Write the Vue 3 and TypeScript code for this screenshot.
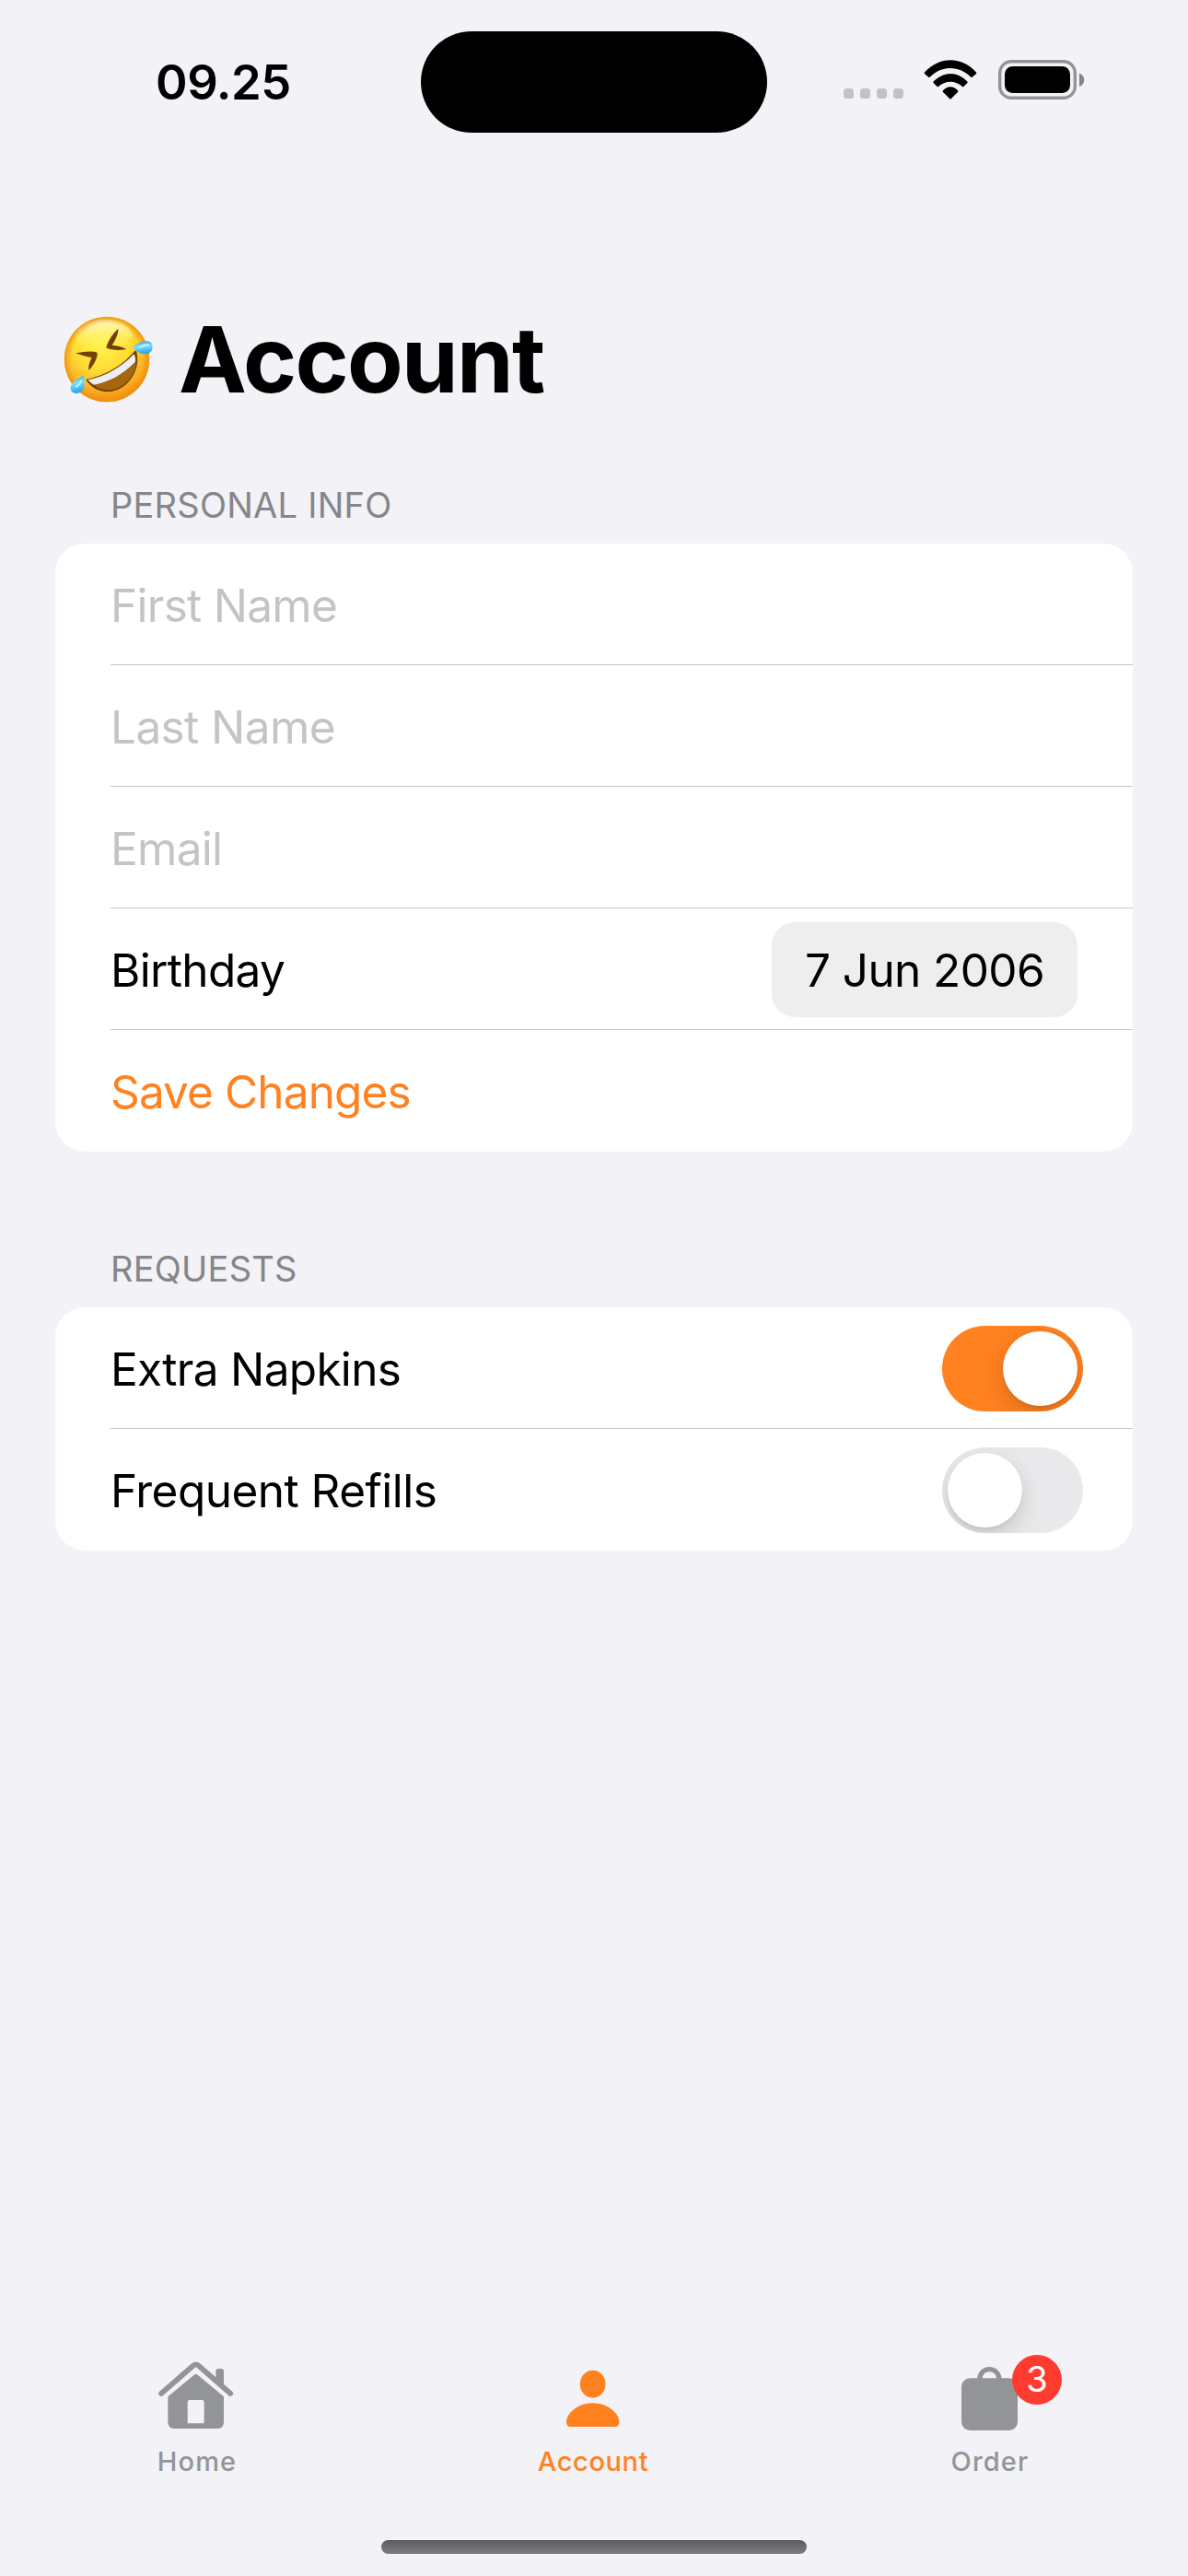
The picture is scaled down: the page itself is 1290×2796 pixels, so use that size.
<script setup lang="ts">
import { ref } from 'vue'

interface Field {
  label: string
  spacing: number
}

interface Request {
  label: string
  spacing: number
  on: boolean
}

const fields: Field[] = [
  { label: 'First Name', spacing: -0.73 },
  { label: 'Last Name', spacing: -0.6 },
  { label: 'Email', spacing: -0.7 },
]

const requests = ref<Request[]>([
  { label: 'Extra Napkins', spacing: -0.7, on: true },
  { label: 'Frequent Refills', spacing: -0.52, on: false },
])
</script>

<template>
  <div class="screen">
    <header class="status">
      <span class="time">09.25</span>
      <div class="island"></div>
      <div class="indicators">
        <div class="dots"><i v-for="n in 4" :key="n"></i></div>
        <svg class="wifi" viewBox="0 0 174 129">
          <path d="M4.500 41.500C27 18 55 3 88 3s61 15 83.500 38.500q3 3 0 6L159 58q-2 2-4 0C136 39.500 113.500 29 88 29S39 39.500 21 58q-2 2-4 0L4.500 47.500q-3-3 0-6Z" transform="translate(-1 -2)" />
          <path d="M32.500 70C48 54.500 66.500 45 87 45s39 9.500 54.500 25q3 3 0 5.500L130 87q-2 2-4 0C115 77 102 71 87 71S59 77 48 87q-2 2-4 0L32.500 75.500q-3-2.500 0-5.500Z" />
          <path d="M63 99.500Q74 88 87 88t24 11.500q3 3 0 5.500L89 126.500q-2 2-4 0L63 105q-3-2.500 0-5.500Z" />
        </svg>
        <svg class="battery" viewBox="0 0 94 43">
          <rect x="1.700" y="1.700" width="81.600" height="39.600" rx="12.500" fill="none" stroke="#949397" stroke-width="3.400" />
          <rect x="7" y="7" width="71" height="29" rx="8.500" />
          <path d="M88 14.500c7 2.500 7 12 0 14.500Z" fill="#858488" />
        </svg>
      </div>
    </header>

    <main>
      <h1>
        <svg class="emoji" viewBox="0 0 420 420" role="img" aria-label="rolling on the floor laughing">
          <defs>
            <radialGradient id="face" cx="0.44" cy="0.3" r="0.72">
              <stop offset="0" stop-color="#fff64a" />
              <stop offset="0.45" stop-color="#ffdd35" />
              <stop offset="0.75" stop-color="#fcb526" />
              <stop offset="1" stop-color="#ee8a0c" />
            </radialGradient>
            <linearGradient id="shine" x1="0" y1="0" x2="0" y2="1">
              <stop offset="0" stop-color="#fffbd8" stop-opacity="0.95" />
              <stop offset="1" stop-color="#fff35c" stop-opacity="0" />
            </linearGradient>
            <radialGradient id="rim" cx="0.5" cy="0.5" r="0.5">
              <stop offset="0.84" stop-color="#f49a12" stop-opacity="0" />
              <stop offset="1" stop-color="#f0900c" stop-opacity="0.9" />
            </radialGradient>
            <linearGradient id="tear" x1="0" y1="0" x2="0.2" y2="1">
              <stop offset="0" stop-color="#2f9fe6" />
              <stop offset="0.5" stop-color="#7fdcfb" />
              <stop offset="1" stop-color="#25a6ef" />
            </linearGradient>
          </defs>
          <circle cx="198" cy="210" r="138.500" fill="url(#face)" />
          <ellipse cx="188" cy="130" rx="92" ry="50" fill="url(#shine)" />
          <circle cx="198" cy="210" r="138.500" fill="url(#rim)" />
          <path d="M95 190C120 185 147 182 162 186q6 2 5 8c-2 17-14 38-28 52-2-13 3-29 10-41-16-3-34-8-54-15Z" fill="#74400a" />
          <path d="M235 110c1 16-9 38-20 54 16 1 33 5 47 13-19 4-42 4-61-2q-6-2-4-8c7-20 20-41 38-57Z" fill="#74400a" />
          <path d="M130 276C192 264 250 230 288 184q5-4 7 2c13 52-18 105-64 124-38 15-82 0-101-34Z" fill="#714108" />
          <path d="M157 294C214 280 264 250 293 219c0 36-28 73-65 87-26 8-51 4-71-12Z" fill="#a5660d" />
          <path d="M137 277c58-12 109-41 149-84 5 8 6 17 5 25-38 39-83 65-135 75-8-4-14-9-19-16Z" fill="#eeeef2" />
          <path d="M282 171c14-12 31-20 47-20 15 0 20 12 17 25-3 14-18 19-35 15-11-3-20-9-29-20Z" fill="url(#tear)" />
          <path d="M122 261c5 19 5 35-2 48-8 13-26 16-36 6-8-9-4-22 5-31 10-10 21-14 33-23Z" fill="url(#tear)" />
          <path d="M304 171q15-10 29-8M99 299q10-7 15-18" fill="none" stroke="#b4f0ff" stroke-width="7" stroke-linecap="round" />
        </svg>
        <span>Account</span>
      </h1>

      <h2>PERSONAL INFO</h2>
      <section class="card">
        <div v-for="f in fields" :key="f.label" class="row">
          <div class="cell placeholder">
            <span :style="{ letterSpacing: f.spacing + 'px' }">{{ f.label }}</span>
          </div>
        </div>
        <div class="row">
          <div class="cell">
            <span>Birthday</span>
            <span class="date">7 Jun 2006</span>
          </div>
        </div>
        <div class="row">
          <div class="cell"><span class="save">Save Changes</span></div>
        </div>
      </section>

      <h2 class="second">REQUESTS</h2>
      <section class="card">
        <div v-for="r in requests" :key="r.label" class="row">
          <div class="cell toggles">
            <span :style="{ letterSpacing: r.spacing + 'px' }">{{ r.label }}</span>
            <button class="toggle" :class="{ on: r.on }" :aria-label="r.label" @click="r.on = !r.on"><i></i></button>
          </div>
        </div>
      </section>
    </main>

    <nav>
      <a class="tab home">
        <svg viewBox="-15 60 540 300">
          <path d="M135 204 240 112.500q8-7 16 0L361 204" fill="none" stroke="currentColor" stroke-width="17" stroke-linecap="round" stroke-linejoin="round" />
          <path d="M313 157V131q0-8 8-8h10q8 0 8 8v49Z" />
          <path fill-rule="evenodd" d="M157 214 242 143q6-5 12 0l85 71v82q0 22-22 22H179q-22 0-22-22ZM228 225q-7 0-7 7v69h54v-69q0-7-7-7Z" />
        </svg>
        <span>Home</span>
      </a>
      <a class="tab active">
        <svg viewBox="15 60 540 300">
          <ellipse cx="281" cy="173" rx="41.500" ry="45" />
          <path d="M281 235c48 0 86 33 86 62q0 15-14 15H209q-14 0-14-15c0-29 38-62 86-62Z" />
        </svg>
        <span>Account</span>
      </a>
      <a class="tab order">
        <svg viewBox="-45 60 540 300">
          <rect x="132" y="154" width="183" height="170" rx="28" />
          <path d="M191 160c0-22 14-35 32-35s32 13 32 35" fill="none" stroke="currentColor" stroke-width="16" />
        </svg>
        <span>Order</span>
        <b class="badge">3</b>
      </a>
    </nav>
    <div class="home-indicator"></div>
  </div>
</template>

<style>
body {
  margin: 0;
  background: #f2f2f7;
}
</style>

<style scoped>
.screen {
  display: flex;
  flex-direction: column;
  width: 1290px;
  height: 2796px;
  overflow: hidden;
  background: #f2f2f7;
  color: #000;
  font-family: Inter, "Liberation Sans", sans-serif;
}
.status {
  display: grid;
  grid-template-columns: 457px 376px 457px;
  height: 320px;
  padding-top: 33px;
  box-sizing: border-box;
  align-items: start;
}
.time {
  padding-left: 169px;
  font-size: 52.5px;
  line-height: 112px;
  font-weight: 600;
  letter-spacing: -0.5px;
}
.island {
  height: 110px;
  margin-top: 1px;
  border-radius: 55px;
  background: #000;
}
.indicators {
  display: flex;
  align-items: flex-start;
  padding: 32px 0 0 83px;
}
.dots {
  display: flex;
  gap: 7px;
  margin-top: 31px;
}
.dots i {
  width: 11px;
  height: 11px;
  border-radius: 3.5px;
  background: #c2c1c6;
}
.wifi {
  width: 58px;
  height: 43px;
  margin-left: 22px;
}
.battery {
  width: 94px;
  height: 43px;
  margin-left: 23px;
}
h1 {
  display: flex;
  align-items: center;
  height: 140px;
  margin: 0;
  padding-left: 50px;
  font-size: 99px;
  line-height: 140px;
  font-weight: 700;
  letter-spacing: -1.7px;
}
.emoji {
  width: 140px;
  height: 140px;
  margin-right: 4px;
}
h2 {
  height: 60px;
  margin: 58px 0 12px 120px;
  font-size: 38px;
  line-height: 60px;
  font-weight: 400;
  letter-spacing: 0.24px;
  color: #86858a;
}
h2.second {
  margin: 97px 0 12px 120px;
}
.card {
  margin: 0 60px;
  border-radius: 32px;
  background: #fff;
  overflow: hidden;
}
.row {
  padding-left: 60px;
}
.cell {
  display: flex;
  align-items: center;
  justify-content: space-between;
  box-sizing: border-box;
  height: 132px;
  padding: 2px 60px 0 0;
  border-bottom: 1px solid #c6c5c8;
  font-size: 49.5px;
  line-height: 60px;
  letter-spacing: -0.66px;
}
.row:last-child .cell {
  border-color: transparent;
}
.toggles {
  padding-right: 54px;
}
.placeholder {
  color: #c4c4c6;
}
.save {
  color: #ff8120;
  letter-spacing: -0.88px;
}
.date {
  width: 332px;
  height: 103px;
  box-sizing: border-box;
  padding-left: 36px;
  border-radius: 25px;
  background: #eeeeef;
  line-height: 104px;
  letter-spacing: -0.59px;
  white-space: nowrap;
}
.toggle {
  display: flex;
  width: 153px;
  height: 93px;
  padding: 6px;
  border: 0;
  border-radius: 47px;
  background: #e9e9eb;
  overflow: hidden;
}
.toggle i {
  width: 81px;
  height: 81px;
  border-radius: 50%;
  background: #fff;
  box-shadow: 0 9px 24px rgba(0, 0, 0, 0.15), 0 3px 3px rgba(0, 0, 0, 0.05);
}
.toggle.on {
  justify-content: flex-end;
  background: #ff8120;
}
nav {
  display: grid;
  grid-template-columns: repeat(3, 430px);
  margin-top: auto;
}
.tab {
  position: relative;
  display: flex;
  flex-direction: column;
  align-items: center;
  color: #939498;
}
.tab svg {
  width: 180px;
  height: 100px;
  fill: currentColor;
}
.tab span {
  margin: 1px 2px 0 0;
  font-size: 29px;
  line-height: 41px;
  font-weight: 500;
  letter-spacing: 1.15px;
}
.tab.active {
  color: #ff8120;
}
.tab.active span {
  letter-spacing: 0.6px;
}
.tab.order span {
  margin-right: 0;
}
.badge {
  position: absolute;
  top: 6px;
  left: 239px;
  width: 54px;
  height: 54px;
  border-radius: 50%;
  background: #ff3b30;
  color: #fff;
  font-size: 38px;
  line-height: 53px;
  font-weight: 400;
  text-align: center;
}
.home-indicator {
  width: 462px;
  height: 15px;
  margin: 65px auto 24px;
  border-radius: 8px;
  background: linear-gradient(#5c5c60, #7e7e82);
}
</style>
